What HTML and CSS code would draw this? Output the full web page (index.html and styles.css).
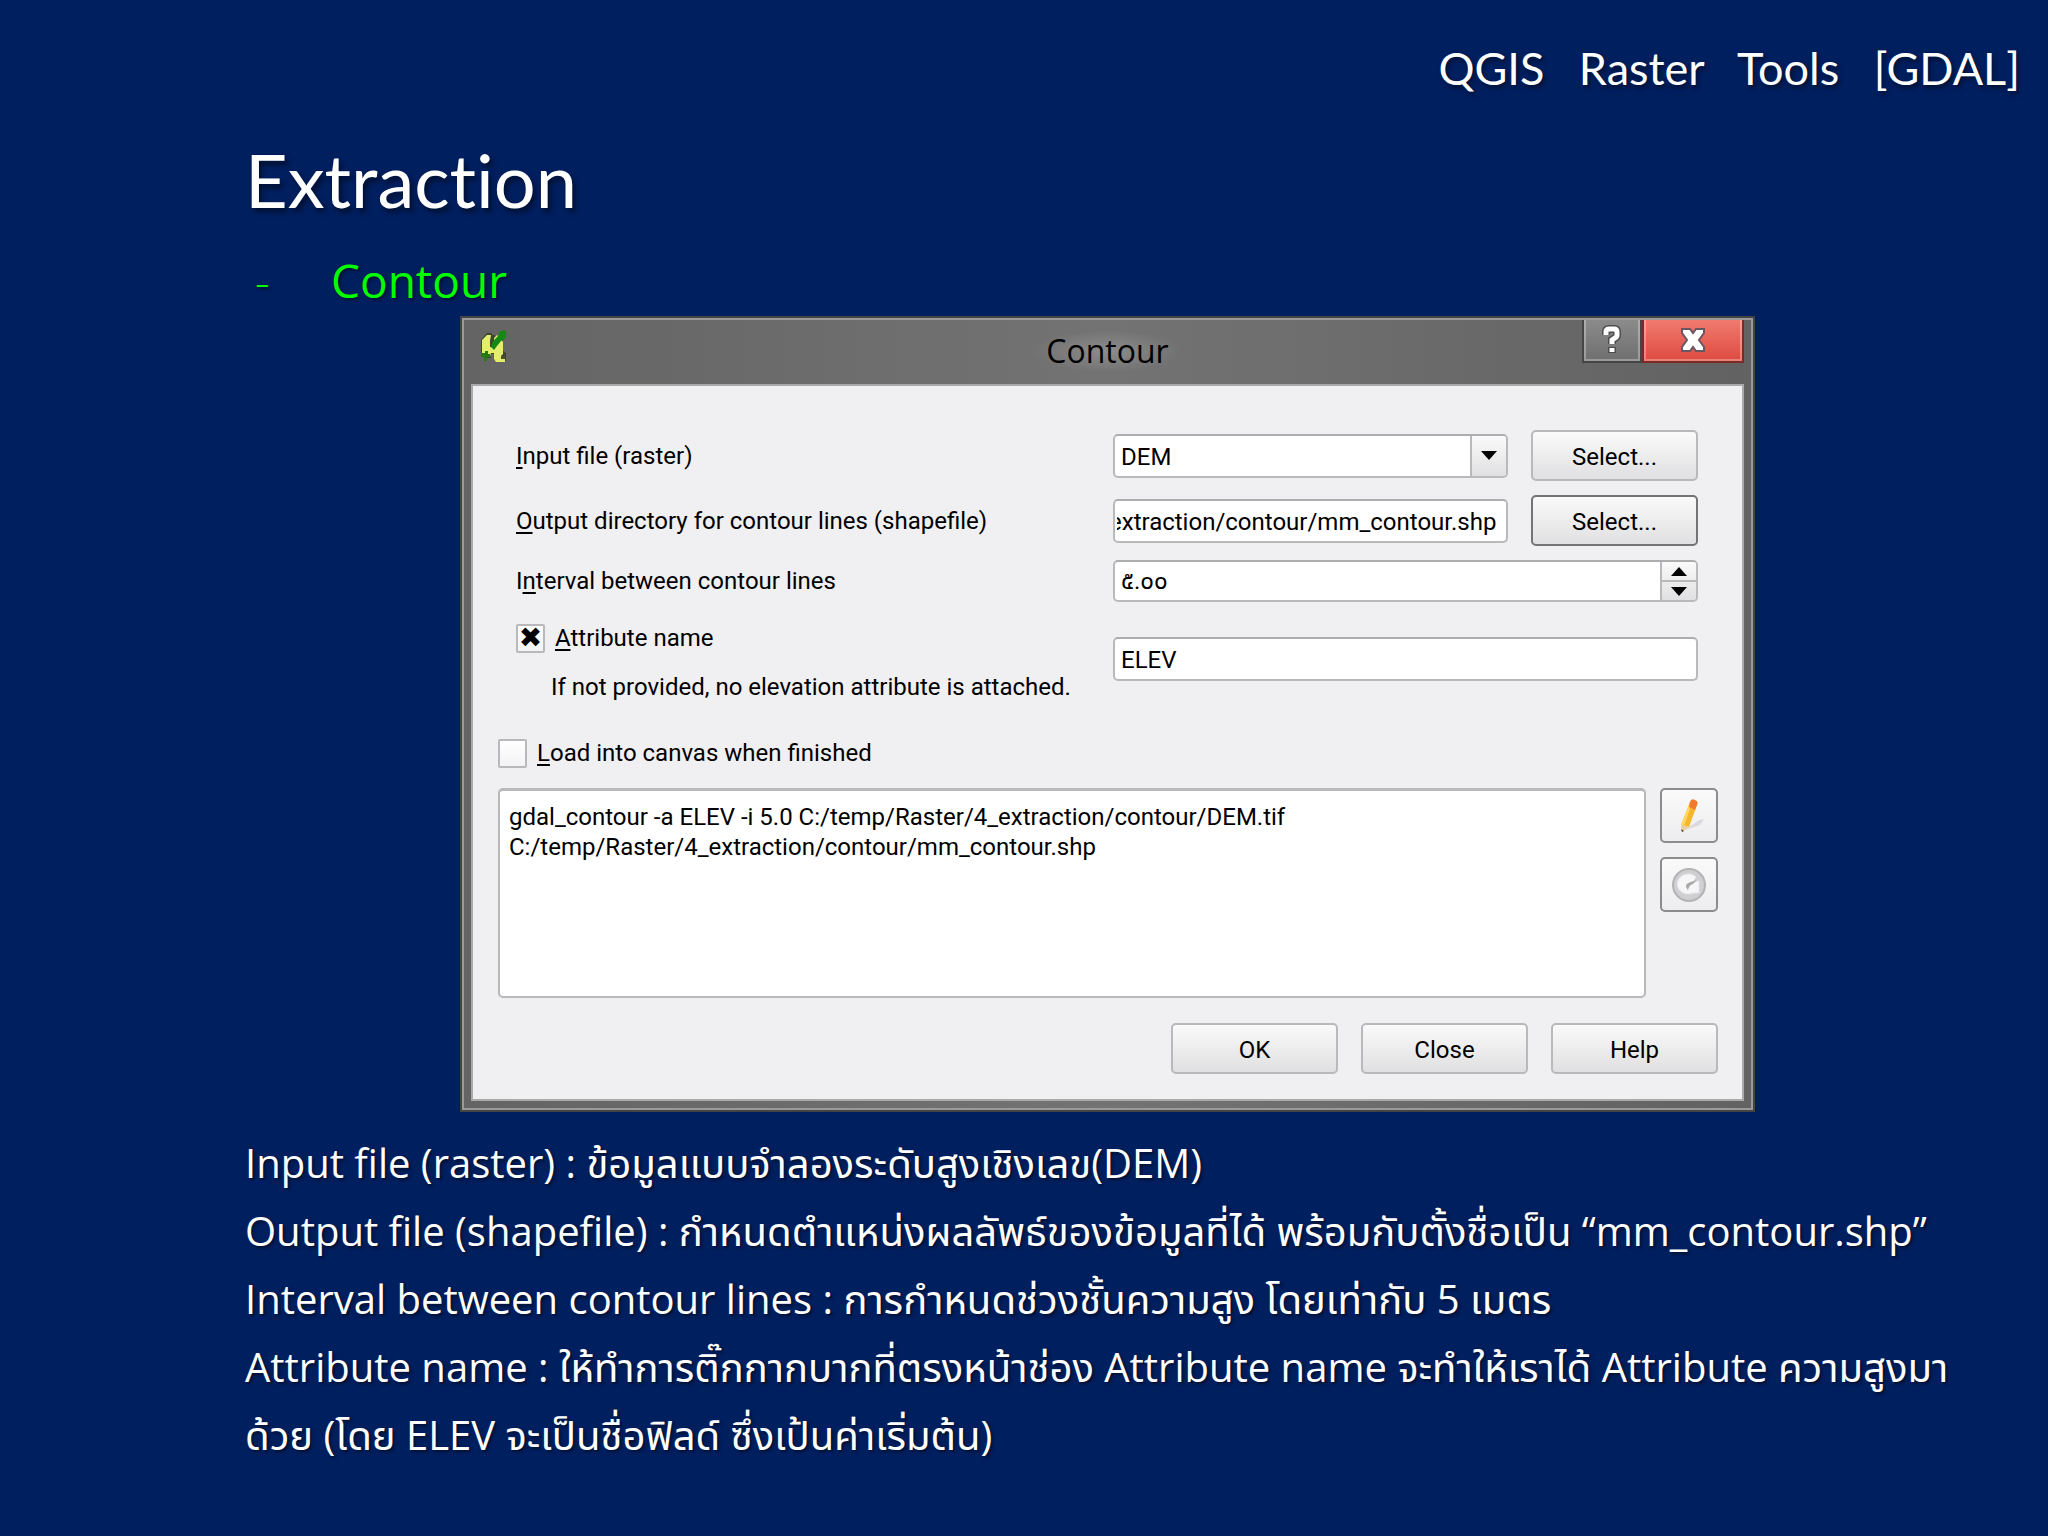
FILE: index.html
```html
<!DOCTYPE html>
<html lang="th">
<head>
    <meta charset="UTF-8">
    <meta name="viewport" content="width=device-width, initial-scale=1.0">
    <title>QGIS Raster Tools [GDAL] - Contour</title>
    <link rel="stylesheet" href="styles.css">
</head>
<body>
    <header class="topbar">QGIS&nbsp;&nbsp; Raster&nbsp;&nbsp; Tools&nbsp;&nbsp; [GDAL]</header>

    <main class="slide">
        <h1>Extraction</h1>
        <ul class="topics">
            <li><span class="dash">-</span>Contour</li>
        </ul>

        <!-- Contour dialog -->
        <section class="dialog">
            <div class="titlebar">
                <svg class="app-icon" viewBox="0 0 30 34" aria-hidden="true">
                    <path d="M8 3h5v2h3l2 4h6v12l3 2v8h-9l-3-3v-4h-3v4H6l-4-6V10z" fill="#26300f" opacity=".6"/>
                    <path d="M8 5h4l-1 6v6h4V8l3-3 4 4 2 3v12l-2 2 4 2v4h-9l-2-3v-6h-3l-1 4H6l-3-4V10z" fill="#e3ee6a"/>
                    <path d="M12 17l2-6 5-5 2-5 6-1v8l-5 3-4 5-3 4z" fill="#148a14"/>
                    <path d="M3 23h3v-2h3v3h2v3H8v4H5v-4H2v-3z" fill="#257a14"/>
                    <path d="M22 26h4v3h-4z" fill="#4a4f30"/>
                </svg>
                <h2>Contour</h2>
                <div class="window-buttons">
                    <button type="button" class="win-help" aria-label="What's this">
                        <svg viewBox="0 0 24 32" aria-hidden="true">
                            <path d="M6 11V8q0-3 3-3h5q3 0 3 3v3q0 2-2 3l-3 2v4" class="glyph-edge"/>
                            <path d="M12 23v6" class="glyph-edge"/>
                            <path d="M6 11V8q0-3 3-3h5q3 0 3 3v3q0 2-2 3l-3 2v4" class="glyph"/>
                            <path d="M12 24v4" class="glyph"/>
                        </svg>
                    </button>
                    <button type="button" class="win-close" aria-label="Close window">
                        <svg viewBox="0 0 28 28" aria-hidden="true">
                            <path d="M3 3h8l3 4 3-4h8v4l-5 7 5 7v4h-8l-3-4-3 4H3v-4l5-7-5-7z" fill="#fff" stroke="#6b5560" stroke-width="2"/>
                        </svg>
                    </button>
                </div>
            </div>

            <form class="client">
                <div class="fields">
                    <label for="inputFile"><u>I</u>nput file (raster)</label>
                    <div class="box combo">
                        <select id="inputFile"><option>DEM</option></select>
                        <span class="arrow-box">
                            <svg viewBox="0 0 18 10" aria-hidden="true"><path d="M0 0h18L9 10z"/></svg>
                        </span>
                    </div>
                    <button type="button" class="btn">Select...</button>

                    <label for="outputFile"><u>O</u>utput directory for contour lines (shapefile)</label>
                    <input type="text" id="outputFile" class="box" value="extraction/contour/mm_contour.shp">
                    <button type="button" class="btn btn-dark">Select...</button>

                    <label for="interval">I<u>n</u>terval between contour lines</label>
                    <div class="box spin wide">
                        <input type="text" id="interval" value="๕.๐๐">
                        <div class="spin-buttons">
                            <button type="button" aria-label="Increase">
                                <svg viewBox="0 0 18 10" aria-hidden="true"><path d="M0 10h18L9 0z"/></svg>
                            </button>
                            <button type="button" aria-label="Decrease">
                                <svg viewBox="0 0 18 10" aria-hidden="true"><path d="M0 0h18L9 10z"/></svg>
                            </button>
                        </div>
                    </div>

                    <div class="attribute">
                        <label class="check"><input type="checkbox" checked><span><u>A</u>ttribute name</span></label>
                        <p>If not provided, no elevation attribute is attached.</p>
                    </div>
                    <input type="text" class="box wide" value="ELEV" aria-label="Attribute name">
                </div>

                <label class="check load"><input type="checkbox"><span><u>L</u>oad into canvas when finished</span></label>

                <div class="command">
                    <textarea aria-label="Command">gdal_contour -a ELEV -i 5.0 C:/temp/Raster/4_extraction/contour/DEM.tif
C:/temp/Raster/4_extraction/contour/mm_contour.shp</textarea>
                    <div class="tools">
                        <button type="button" class="btn btn-tool" aria-label="Edit">
                            <svg viewBox="0 0 36 36" aria-hidden="true">
                                <path d="M14 32l14-10 5-1-4 6z" fill="#d9d9dd"/>
                                <path d="M10 27L19 4l7 3-8 22z" fill="#f8b62c"/>
                                <path d="M10 27L19 4l2 1-8 23z" fill="#fdd868"/>
                                <path d="M19 4q1-4 5-2 4 2 2 5l-2 5-6-3z" fill="#f17a2c"/>
                                <path d="M10 27l8 2-7 5z" fill="#e9cfa0"/>
                                <path d="M10 31l3 2-2 1z" fill="#55402a"/>
                            </svg>
                        </button>
                        <button type="button" class="btn btn-tool" aria-label="Reset">
                            <svg viewBox="0 0 36 36" aria-hidden="true">
                                <circle cx="18" cy="18" r="16" fill="#cfcfd1" stroke="#b4b4b6" stroke-width="2"/>
                                <path d="M25 10a11 10 0 1 0-3 16h6V14l-8 1-4 4 1 5" fill="#f6f6f7" stroke="#e6e6e8"/>
                                <path d="M17 23q-4-4 0-7l9-3-4 4q-4 1-5 6z" fill="#a8a8aa"/>
                            </svg>
                        </button>
                    </div>
                </div>

                <div class="actions">
                    <button type="button" class="btn">OK</button>
                    <button type="button" class="btn">Close</button>
                    <button type="button" class="btn">Help</button>
                </div>
            </form>
        </section>

        <div class="notes">
            <p>Input file (raster) : ข้อมูลแบบจำลองระดับสูงเชิงเลข(DEM)</p>
            <p>Output file (shapefile) : กำหนดตำแหน่งผลลัพธ์ของข้อมูลที่ได้ พร้อมกับตั้งชื่อเป็น “mm_contour.shp”</p>
            <p>Interval between contour lines : การกำหนดช่วงชั้นความสูง โดยเท่ากับ 5 เมตร</p>
            <p>Attribute name : ให้ทำการติ๊กกากบากที่ตรงหน้าช่อง Attribute name จะทำให้เราได้ Attribute ความสูงมา<br>ด้วย (โดย ELEV จะเป็นชื่อฟิลด์ ซึ่งเป้นค่าเริ่มต้น)</p>
        </div>
    </main>

    <script>
        // Show the end of the path, the file name matters most
        const outputFile = document.getElementById('outputFile');
        outputFile.scrollLeft = outputFile.scrollWidth;
    </script>
</body>
</html>
```
FILE: styles.css
```css
* {
    box-sizing: border-box;
}
body {
    margin: 0;
    min-height: 100vh;
    background-color: #001f5f;
    color: #fff;
    font-family: "Open Sans", "Noto Sans", "Noto Sans Thai", sans-serif;
}
h1, h2, p, ul {
    margin: 0;
    padding: 0;
    font-weight: normal;
}
.topbar {
    padding: 38px 28px 0;
    text-align: right;
    font-family: Lato, sans-serif;
    font-size: 45px;
    line-height: 60px;
    text-shadow: 2px 3px 4px rgba(0, 0, 0, 0.5);
}
.slide {
    padding: 34px 20px 0 245px;
}
h1 {
    font-family: Lato, sans-serif;
    font-size: 74px;
    font-variant-ligatures: none;
    line-height: 96px;
    text-shadow: 3px 4px 5px rgba(0, 0, 0, 0.5);
}
.topics {
    list-style: none;
    padding: 20px 0 4px 10px;
    color: #00ff00;
    font-size: 46px;
    line-height: 64px;
    text-shadow: 2px 2px 3px rgba(0, 0, 0, 0.5);
}
.topics li {
    display: flex;
}
.dash {
    width: 76px;
    font-weight: 300;
}

/* Dialog window */
.dialog {
    margin: 0 273px 0 215px;
    border: 2px solid #444;
    outline: 2px solid #9a9a9a;
    outline-offset: -4px;
    padding: 0 9px 9px;
    background: linear-gradient(90deg, #646464, #747374 50%, #626262);
    color: #000;
    font-family: Roboto, "Noto Sans", "Noto Sans Thai", sans-serif;
    font-size: 24px;
}
.titlebar {
    display: grid;
    grid-template-columns: 1fr auto 1fr;
    align-items: start;
    height: 66px;
}
.app-icon {
    width: 30px;
    height: 34px;
    margin: 12px 8px 0;
}
h2 {
    margin-top: 12px;
    padding: 0 12px;
    font-family: "Open Sans", sans-serif;
    font-size: 32px;
    line-height: 42px;
    background: radial-gradient(closest-side, #8c8c8c, transparent);
}
.window-buttons {
    display: flex;
    justify-content: flex-end;
}
.window-buttons button {
    display: flex;
    align-items: center;
    justify-content: center;
    height: 45px;
    padding: 0;
    border: 2px solid #454545;
    border-top: 0;
    box-shadow: inset 0 0 0 2px rgba(255, 255, 255, 0.3);
}
.window-buttons .win-help {
    width: 60px;
    background: linear-gradient(#8c8c8c, #6f6f70);
}
.window-buttons .win-close {
    width: 102px;
    border-color: #7c2a26;
    background: linear-gradient(#f27d72, #dd4a40);
}
.win-help svg {
    width: 24px;
    height: 32px;
}
.win-close svg {
    width: 28px;
    height: 28px;
}
.glyph, .glyph-edge {
    fill: none;
    stroke: #fff;
    stroke-width: 5;
}
.glyph-edge {
    stroke: #4d4d4d;
    stroke-width: 8;
}
.client {
    padding: 44px 24px 25px 25px;
    border: 2px solid #aaa;
    background-color: #f0eff1;
}

/* Form rows */
.fields {
    display: grid;
    grid-template-columns: 1fr 395px 167px;
    gap: 14px 23px;
    align-items: center;
    padding: 0 20px 0 18px;
}
.fields label {
    line-height: 30px;
}
u {
    text-underline-offset: 3px;
    text-decoration-thickness: 2px;
}
.wide {
    grid-column: span 2;
}
.box {
    width: 100%;
    height: 44px;
    padding: 2px 6px 0;
    border: 2px solid #b9b9bb;
    border-top-color: #adadaf;
    border-radius: 5px;
    background-color: #fff;
    color: #000;
    font: inherit;
}
#outputFile {
    padding: 2px 10px 0 2px;
}
.combo, .spin {
    display: flex;
    padding: 0;
    overflow: hidden;
}
.combo select, .spin input {
    flex: 1;
    min-width: 0;
    padding: 2px 6px 0;
    border: 0;
    appearance: none;
    background: none;
    color: #000;
    font: inherit;
}
.spin {
    height: 42px;
}
.arrow-box, .spin-buttons {
    display: flex;
    width: 36px;
    border-left: 2px solid #b9b9bb;
    background: linear-gradient(#fafafa, #e0e0e2);
}
.arrow-box {
    align-items: center;
    justify-content: center;
}
.arrow-box svg, .spin-buttons svg {
    width: 16px;
    height: 9px;
}
.spin-buttons {
    flex-direction: column;
}
.spin-buttons button {
    display: flex;
    flex: 1;
    align-items: center;
    justify-content: center;
    padding: 0;
    border: 0;
    background: none;
}
.spin-buttons button + button {
    border-top: 2px solid #b9b9bb;
}
.btn {
    width: 167px;
    height: 51px;
    padding: 2px 0 0;
    border: 2px solid #b9b9bb;
    border-radius: 5px;
    background: linear-gradient(#fafafa, #e0e0e2);
    color: #000;
    font: inherit;
}
.btn-dark {
    border-color: #747476;
}
.attribute {
    padding-top: 7px;
    line-height: 30px;
}
.attribute p {
    margin: 19px 0 0 35px;
    white-space: nowrap;
}
.check {
    display: flex;
    align-items: center;
    gap: 10px;
}
.check input {
    display: flex;
    align-items: center;
    justify-content: center;
    width: 29px;
    height: 29px;
    margin: 0;
    border: 2px solid #b9b9bb;
    border-radius: 2px;
    appearance: none;
    background: linear-gradient(#fff, #f3f3f5);
}
.check input:checked::before {
    content: "✖";
    font-family: "DejaVu Sans", sans-serif;
    font-size: 28px;
    line-height: 26px;
}
.load {
    margin-top: 36px;
    line-height: 30px;
}
.command {
    display: flex;
    gap: 14px;
    margin-top: 20px;
}
.command textarea {
    flex: 1;
    height: 210px;
    padding: 11px 9px;
    border: 2px solid #b9b9bb;
    border-top-width: 3px;
    border-radius: 5px;
    background-color: #fff;
    color: #000;
    font: inherit;
    line-height: 30px;
    resize: none;
}
.tools {
    display: flex;
    flex-direction: column;
    gap: 14px;
}
.btn-tool {
    display: flex;
    align-items: center;
    justify-content: center;
    width: 58px;
    height: 55px;
    padding: 0;
    border-color: #8c8c8e;
    background: linear-gradient(#fafafa, #ededef);
}
.btn-tool svg {
    width: 36px;
    height: 36px;
}
.actions {
    display: flex;
    justify-content: flex-end;
    gap: 23px;
    margin-top: 25px;
}

/* Explanation below the dialog */
.notes {
    padding-top: 17px;
    font-size: 40px;
    line-height: 68px;
    white-space: nowrap;
    text-shadow: 2px 2px 3px rgba(0, 0, 0, 0.5);
}
```
